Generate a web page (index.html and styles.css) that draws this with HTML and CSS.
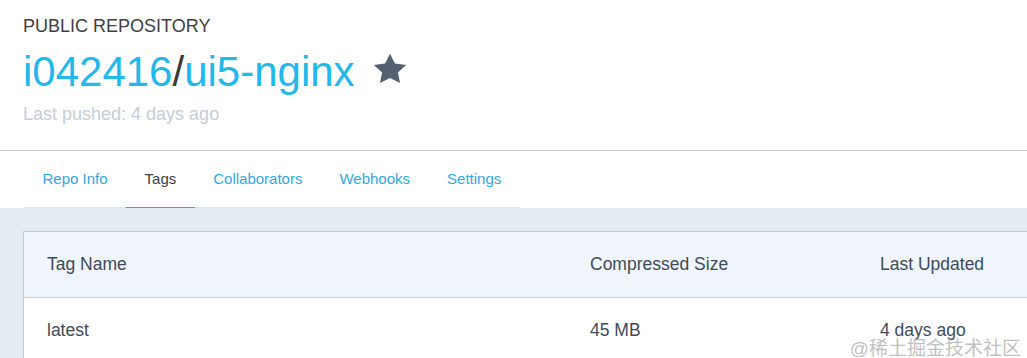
FILE: index.html
```html
<!DOCTYPE html>
<html lang="en">
<head>
    <meta charset="UTF-8">
    <meta name="viewport" content="width=device-width, initial-scale=1.0">
    <title>i042416/ui5-nginx - Tags</title>
    <link rel="stylesheet" href="styles.css">
</head>
<body>

    <div class="repo-header">
        <div class="repo-type">PUBLIC REPOSITORY</div>
        <h1 class="repo-title">
            <a href="#">i042416</a><span class="slash">/</span><a href="#">ui5-nginx</a>
            <svg class="star" viewBox="0 0 24 24" width="36" height="34" preserveAspectRatio="none">
                <path d="M12 1.3l3.3 6.9 7.5 1-5.5 5.2 1.4 7.5L12 18.3l-6.7 3.6 1.4-7.5L1.2 9.2l7.5-1z"/>
            </svg>
        </h1>
        <div class="last-pushed">Last pushed: 4 days ago</div>
    </div>

    <div class="tab-strip">
        <ul class="tabs">
            <li><a href="#">Repo Info</a></li>
            <li class="active"><a href="#">Tags</a></li>
            <li><a href="#">Collaborators</a></li>
            <li><a href="#">Webhooks</a></li>
            <li><a href="#">Settings</a></li>
        </ul>
    </div>

    <div class="content">
        <div class="tag-table">
            <div class="row head">
                <div>Tag Name</div>
                <div>Compressed Size</div>
                <div>Last Updated</div>
            </div>
            <div class="row">
                <div>latest</div>
                <div>45 MB</div>
                <div>4 days ago</div>
            </div>
        </div>
    </div>

    <div class="watermark">@稀土掘金技术社区</div>

</body>
</html>
```

FILE: styles.css
```css
html, body {
    height: 100%;
}

body {
    margin: 0;
    padding: 0;
    font-family: "Liberation Sans", Arial, sans-serif;
    background: #e4ebf3;
    overflow: hidden;
    position: relative;
}

a {
    text-decoration: none;
}

.repo-header {
    background: #fff;
    padding: 16px 23px 26px;
    border-bottom: 1px solid #c4cdd6;
}

.repo-type {
    font-size: 18px;
    line-height: 20px;
    color: #404040;
}

.repo-title {
    margin: 12px 0 0;
    font-size: 42px;
    font-weight: normal;
    line-height: 48px;
    display: flex;
    align-items: center;
}

.repo-title a {
    color: #22b8eb;
}

.slash {
    color: #3a3a3a;
}

.star {
    fill: #556070;
    margin-left: 17px;
    margin-top: -6px;
}

.last-pushed {
    margin-top: 8px;
    font-size: 18px;
    line-height: 20px;
    color: #c4cdd8;
}

.tab-strip {
    background: #fff;
    padding-left: 24px;
}

.tabs {
    list-style: none;
    margin: 0;
    padding: 0;
    display: flex;
    width: 496px;
    border-bottom: 1px solid #dbe3ec;
}

.tabs li {
    flex-shrink: 0;
    white-space: nowrap;
    margin-bottom: -1px;
    border-bottom: 1px solid transparent;
}

.tabs li.active {
    border-bottom-color: #2aaee0;
}

.tabs a {
    display: block;
    padding: 0 18.5px;
    line-height: 56px;
    font-size: 15px;
    color: #2fa9e0;
}

.tabs li.active a {
    color: #3d3d3d;
}

.content {
    padding: 23px 0 0 23px;
}

.tag-table {
    width: 1100px;
    background: #fff;
    border: 1px solid #c4cdd6;
    border-right: none;
}

.row {
    display: grid;
    grid-template-columns: 543px 290px 1fr;
    padding-left: 23px;
    height: 65px;
    align-items: center;
    font-size: 17.5px;
    color: #3f4b5a;
}

.row.head {
    background: #f0f5fc;
    border-bottom: 1px solid #c4cdd6;
}

.watermark {
    position: absolute;
    right: 6px;
    bottom: -2px;
    font-family: "Liberation Sans", "Noto Sans CJK SC", sans-serif;
    font-size: 19px;
    color: rgba(170, 170, 170, 0.75);
}
```
